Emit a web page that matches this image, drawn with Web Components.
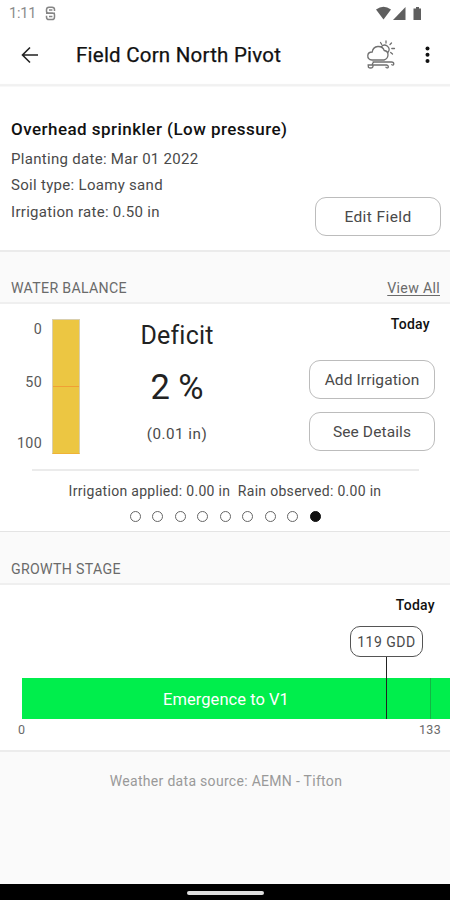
<!DOCTYPE html>
<html lang="en">
<head>
<meta charset="utf-8">
<meta name="viewport" content="width=device-width, initial-scale=1">
<title>Field Corn North Pivot</title>
<style>
  html, body { margin: 0; height: 100%; }
  body {
    display: flex;
    flex-direction: column;
    height: 900px;
    overflow: hidden;
    background: #fafafa;
    color: #4a4a4a;
    font-family: Roboto, "Liberation Sans", sans-serif;
    font-size: 15px;
    letter-spacing: 0.3px;
  }
</style>
</head>
<body>
  <status-bar time="1:11"></status-bar>
  <app-bar>Field Corn North Pivot</app-bar>

  <field-summary>
    <span slot="title">Overhead sprinkler (Low pressure)</span>
    <span>Planting date: Mar 01 2022</span>
    <span>Soil type: Loamy sand</span>
    <span>Irrigation rate: 0.50 in</span>
    <outline-button slot="action" style="letter-spacing: 0.4px">Edit Field</outline-button>
  </field-summary>

  <section-header style="height: 52px">WATER BALANCE<a slot="link">View All</a></section-header>
  <water-balance percent="2 %" amount="(0.01 in)">
    <span slot="totals">Irrigation applied: 0.00 in&nbsp; Rain observed: 0.00 in</span>
  </water-balance>

  <section-header>GROWTH STAGE</section-header>
  <growth-stage stage="Emergence to V1" from="0" to="133">119 GDD</growth-stage>

  <source-note>Weather data source: AEMN - Tifton</source-note>
  <nav-bar></nav-bar>

<script>
/** Base class: puts the static template() of the subclass in an open shadow root. */
class BaseElement extends HTMLElement {
  constructor() {
    super();
    this.attachShadow({ mode: 'open' });
  }

  connectedCallback() {
    this.shadowRoot.innerHTML = this.template();
  }

  attr(name) {
    return this.getAttribute(name) || '';
  }
}

class StatusBar extends BaseElement {
  template() {
    return `
      <style>
        :host { display: flex; align-items: center; flex: none; height: 26px; padding: 0 27px 0 9px;
          box-sizing: border-box; background: #fff; color: #8a8a8a; font-size: 14.500px; letter-spacing: -0.2px; }
        svg { display: block; }
        .app { margin-left: 9px; }
        .icons { margin-left: auto; }
      </style>
      <span>${this.attr('time')}</span>
      <svg class="app" width="11" height="15" viewBox="0 0 11 15" fill="none" stroke="#858585" stroke-width="1.5">
        <path d="M9.5 5V3.6Q9.5 1.2 7 1.2H4Q1.5 1.2 1.5 3.8V5.2Q1.5 7 3.5 7H7.5Q9.5 7 9.5 9V11Q9.5 13.6 7 13.6H4Q1.5 13.6 1.5 11V9.7M1 7.2H10M4 4H7.4M4 10.4H7.4"/>
      </svg>
      <svg class="icons" width="48" height="15" viewBox="0 0 48 15" fill="#5f5f5f">
        <path d="M1 3.5Q8.500-2 16 3.500L8.500 13.500Z"/>
        <path d="M30.500 1V14H18Z"/>
        <path d="M38.500 2.500H41V1H44V2.500H46V14H38.500Z"/>
      </svg>`;
  }
}

class AppBar extends BaseElement {
  template() {
    return `
      <style>
        :host { display: flex; align-items: center; flex: none; height: 61px; padding: 0 20px 3px 20px;
          box-sizing: border-box; background: #fff; border-bottom: 1px solid #f8f8f8;
          box-shadow: inset 0 -3px 1px -1px #f1f1f1; }
        h1 { flex: 1; margin: 0 0 0 35px; font-size: 20.500px; font-weight: 400; letter-spacing: 0.23px;
          color: #111; -webkit-text-stroke: 0.25px #111; white-space: nowrap; }
        svg { display: block; }
        .weather { margin-right: 29px; }
      </style>
      <svg width="21" height="18" viewBox="0 0 21 18" fill="none" stroke="#222" stroke-width="1.600">
        <path d="M18 9H3M10 1.500L2.500 9L10 16.500"/>
      </svg>
      <h1><slot></slot></h1>
      <svg class="weather" width="30" height="30" viewBox="0 0 30 30" fill="none" stroke="#707070" stroke-width="1.300" stroke-linecap="round">
        <path d="M6 20Q1.500 19.500 1.800 15.500Q2 12 6.200 12Q7 7 11.800 6.500Q16.800 6.200 18.200 10.500Q22.200 11 22 15Q21.700 19 18 20Z"/>
        <path d="M15.500 6.500Q18 3.700 21.200 6Q24.800 9 21.800 12.500M20 1V3M14.500 2.500L15.700 4.300M25.500 3L24 4.500M25.800 8.500H28.500M24.700 12.500L26.500 14"/>
        <path d="M7 22H25.500Q27.800 22 27.800 24Q27.200 25.700 25.800 24.700M2 25H20.500Q22.800 25.500 22.200 27.500Q21 28.500 20 27.300M7.500 22.500Q5.500 24 7 25Q7.500 28 4.500 28Q2 28 2.300 26"/>
      </svg>
      <svg width="5" height="18" viewBox="0 0 5 18" fill="#111">
        <circle cx="2.500" cy="2.500" r="2"/><circle cx="2.500" cy="8.700" r="2"/><circle cx="2.500" cy="15" r="2"/>
      </svg>`;
  }
}

class OutlineButton extends BaseElement {
  template() {
    return `
      <style>
        :host { display: flex; align-items: center; justify-content: center; width: 124px; height: 37px;
          border: 1px solid #bcbcbc; border-radius: 11px; background: #fff; color: #4a4a4a;
          font-size: 15.500px; letter-spacing: 0.1px; line-height: 20px; }
      </style>
      <slot></slot>`;
  }
}

class FieldSummary extends BaseElement {
  template() {
    return `
      <style>
        :host { display: flex; justify-content: space-between; align-items: flex-end; flex: none; height: 165px;
          padding: 0 9px 14px 11px; box-sizing: border-box; background: #fff;
          border-bottom: 2px solid #ebebeb; }
        .lines { display: flex; flex-direction: column; line-height: 26.300px; font-size: 15px;
          align-self: flex-start; padding-top: 27px; white-space: nowrap; }
        .title { font-size: 17px; font-weight: 500; color: #111; line-height: 30px; letter-spacing: 0.46px;
          margin-bottom: 2px; }
      </style>
      <div class="lines">
        <div class="title"><slot name="title"></slot></div>
        <slot></slot>
      </div>
      <slot name="action"></slot>`;
  }
}

class SectionHeader extends BaseElement {
  template() {
    return `
      <style>
        :host { display: flex; justify-content: space-between; align-items: flex-end; flex: none; height: 53px;
          padding: 0 10px 4px 11px; box-sizing: border-box; border-bottom: 2px solid #efefef;
          color: #6a6a6a; font-size: 14.200px; line-height: 20px; }
        ::slotted(a) { text-decoration: underline; text-underline-offset: 2px; }
      </style>
      <span><slot></slot></span>
      <slot name="link"></slot>`;
  }
}

/** Soil water column with its 0 / 50 / 100 scale. */
class WaterGauge extends BaseElement {
  template() {
    return `
      <style>
        :host { display: flex; gap: 10px; height: 135px; }
        .scale { display: flex; flex-direction: column; justify-content: space-between; width: 42px;
          padding-bottom: 1px; text-align: right; line-height: 20px; font-size: 14.300px; color: #5a5a5a; }
        .scale span:nth-child(2) { margin-bottom: 8px; }
        .bar { display: flex; flex-direction: column; justify-content: center; width: 26px;
          border: 1px solid #d9cfae; border-bottom-color: #f0b335; box-sizing: content-box;
          background: #ecc642; height: 133px; }
        .bar i { height: 1px; background: #f0a035; }
      </style>
      <div class="scale"><span>0</span><span>50</span><span>100</span></div>
      <div class="bar"><i></i></div>`;
  }
}

class PageDots extends BaseElement {
  template() {
    const count = Number(this.attr('count'));
    return `
      <style>
        :host { display: flex; justify-content: center; gap: 11.500px; }
        i { width: 11px; height: 11px; box-sizing: border-box; border: 1px solid #666; border-radius: 50%; }
        i:last-child { background: #111; border-color: #111; }
      </style>
      ${'<i></i>'.repeat(count)}`;
  }
}

class WaterBalance extends BaseElement {
  template() {
    return `
      <style>
        :host { display: flex; flex-direction: column; flex: none; height: 228px; box-sizing: border-box;
          background: #fff; border-bottom: 1px solid #e4e4e4; }
        .row { display: grid; grid-template-columns: 80px 194px 1fr; height: 165px; }
        water-gauge { margin-top: 15px; }
        .reading { display: flex; flex-direction: column; align-items: center; color: #222; }
        .label { margin-top: 17px; font-size: 25px; line-height: 30px; letter-spacing: 0.2px; }
        .percent { margin-top: 16px; font-size: 34.500px; line-height: 40px; letter-spacing: 0; }
        .amount { margin-top: 17px; font-size: 15.200px; line-height: 20px; color: #4a4a4a; letter-spacing: 0.5px; }
        .side { display: flex; flex-direction: column; align-items: flex-end; padding-right: 15px; }
        .today { margin: 10px 5px 0 0; font-size: 14px; font-weight: 500; line-height: 20px; color: #111; }
        .side outline-button { margin-top: 13px; }
        .side .today + outline-button { margin-top: 26px; }
        hr { width: 387px; height: 2px; margin: 0 0 0 32px; border: 0; background: #ebebeb; }
        .totals { margin-top: 10px; text-align: center; font-size: 14px; line-height: 20px; white-space: nowrap; }
        page-dots { margin-top: 10px; }
      </style>
      <div class="row">
        <water-gauge></water-gauge>
        <div class="reading">
          <div class="label">Deficit</div>
          <div class="percent">${this.attr('percent')}</div>
          <div class="amount">${this.attr('amount')}</div>
        </div>
        <div class="side">
          <div class="today">Today</div>
          <outline-button>Add Irrigation</outline-button>
          <outline-button>See Details</outline-button>
        </div>
      </div>
      <hr>
      <div class="totals"><slot name="totals"></slot></div>
      <page-dots count="9"></page-dots>`;
  }
}

class GrowthStage extends BaseElement {
  template() {
    return `
      <style>
        :host { display: flex; flex-direction: column; flex: none; height: 167px; box-sizing: border-box;
          background: #fff; border-bottom: 2px solid #ececec; }
        .today { margin: 10px 15px 0 0; text-align: right; font-size: 14px; font-weight: 500; line-height: 20px; color: #111; }
        .chart { position: relative; margin-top: 63px; padding-left: 22px; }
        .track { display: grid; grid-template-columns: 409px 1fr; height: 41px; background: #00ee4c; }
        .stage { display: flex; align-items: center; justify-content: center; border-right: 1px solid #14b445;
          color: #fff; font-size: 16.500px; letter-spacing: 0.05px; padding-top: 2px; box-sizing: border-box; }
        /* marker sits on top of the track */
        .marker { position: absolute; left: 350px; top: -52px; display: flex; flex-direction: column;
          align-items: center; width: 73px; height: 93px; }
        .marker b { width: 71px; height: 29px; border: 1px solid #555; border-radius: 10px; text-align: center;
          font-weight: 400; font-size: 14px; line-height: 30px; letter-spacing: 0.5px; }
        .marker i { flex: 1; width: 1px; background: #222; }
        .axis { display: flex; justify-content: space-between; padding: 1px 9px 0 18px; font-size: 12.500px;
          line-height: 20px; letter-spacing: 0.3px; color: #6a6a6a; }
      </style>
      <div class="today">Today</div>
      <div class="chart">
        <div class="track"><div class="stage">${this.attr('stage')}</div></div>
        <div class="marker"><b><slot></slot></b><i></i></div>
      </div>
      <div class="axis"><span>${this.attr('from')}</span><span>${this.attr('to')}</span></div>`;
  }
}

class SourceNote extends BaseElement {
  template() {
    return `
      <style>
        :host { display: block; flex: 1; padding: 19px 0 0 2px; text-align: center; color: #999;
          font-size: 14px; line-height: 20px; }
      </style>
      <slot></slot>`;
  }
}

class NavBar extends BaseElement {
  template() {
    return `
      <style>
        :host { display: flex; align-items: center; justify-content: center; flex: none; height: 16px; background: #000; }
        i { width: 77px; height: 4px; margin-top: 2px; border-radius: 2px; background: #dedede; }
      </style>
      <i></i>`;
  }
}

customElements.define('status-bar', StatusBar);
customElements.define('app-bar', AppBar);
customElements.define('outline-button', OutlineButton);
customElements.define('field-summary', FieldSummary);
customElements.define('section-header', SectionHeader);
customElements.define('water-gauge', WaterGauge);
customElements.define('page-dots', PageDots);
customElements.define('water-balance', WaterBalance);
customElements.define('growth-stage', GrowthStage);
customElements.define('source-note', SourceNote);
customElements.define('nav-bar', NavBar);
</script>
</body>
</html>
